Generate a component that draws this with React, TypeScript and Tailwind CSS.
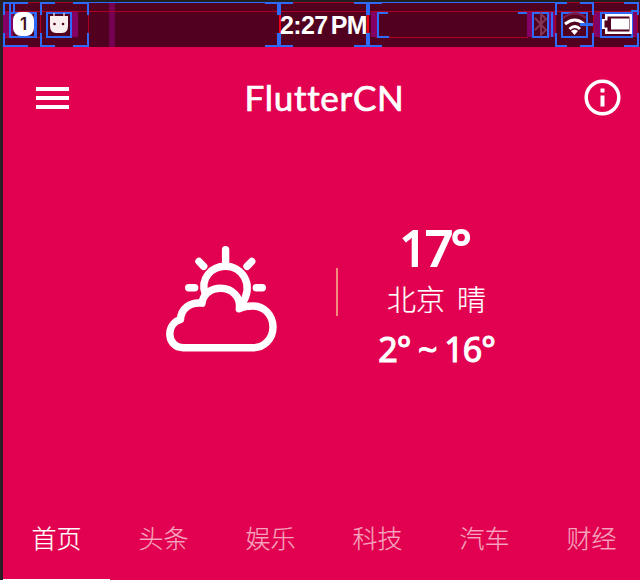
import React from "react";

const cjk = "font-['Noto_Sans_CJK_SC',sans-serif] font-light [-webkit-text-stroke:0.2px_currentColor]";

function LayoutBounds() {
  return (
    <svg className="absolute inset-0" width="640" height="48" viewBox="0 0 640 48" fill="none" shapeRendering="crispEdges">
      <g fill="#850064">
        <path d="M3 12h10v25H3zM72 12h6v25h-6zM371 12h6v25h-6zM527 12h5v25h-5zM548 12h7v25h-7zM593 12h8v25h-8zM632 12h6v25h-6z" />
        <path d="M109 2h6v45h-6z" opacity=".7" />
      </g>
      <g stroke="#ad0027">
        <path d="M3 2.500h637M3 11.500h637M40.500 2v45M88.500 2v45M376 37.500h152M555.500 2v45M593.500 2v45M637.500 2v45M3 37.500h40" />
        <path d="M280 15v18M368 15v18" stroke="#f00018" strokeWidth="2" />
      </g>
      <g stroke="#2f6bfb" strokeWidth="2">
        <path d="M10 13h26v24h-26zM47 13h24v24h-24zM533 13h15v24h-15zM562 13h25v24h-25zM601 13h31v24h-31z" />
        <path d="M4 15V3h24M4 33v13h24M10 2v10M14 2v10M41 15V3h14M73 3h15v12M41 33v13h14M73 46h15v-13" />
        <path d="M265 46h28M354 46h28M382 3h-28M265 3h28M388 13h-10v24h11M518 13h9M552 12v25" />
        <path d="M88 2.500h190M382 2.500h173" strokeWidth="1" />
        <path d="M556 15V3h11M580 3h13v12M556 33v13h11M580 46h13v-13M624 3h14v12M624 46h14v-13M638 11h-7" />
        <path d="M279 2v13M279 33v14M368 2v13M368 33v14" strokeWidth="4" />
        <path d="M35.500 12v25" strokeWidth="3" />
      </g>
    </svg>
  );
}

function StatusBar() {
  return (
    <header className="relative h-[47px] shrink-0 border-t-2 border-[#202023] bg-[#51001f]">
      <div className="absolute -left-[3px] -top-[2px] h-12 w-[640px]">
        <LayoutBounds />
        <div className="absolute left-[13px] top-3 flex h-6 w-[21px] items-center justify-center rounded-[8px] bg-white font-['Inter',sans-serif] text-[17px] font-semibold leading-none text-[#40101f]">1</div>
        <svg className="absolute left-[49px] top-[12px]" width="20" height="22" viewBox="0 0 20 22">
          <path d="M5 1v4M15 1v4" stroke="#d9c3ce" strokeWidth="1.500" />
          <path d="M1 4h18v10q0 7-6 7H7q-6 0-6-7z" fill="#f8eef0" />
          <circle cx="5.500" cy="12" r="1.300" fill="#51001f" /><circle cx="14" cy="12" r="1.300" fill="#51001f" />
        </svg>
        <div className="absolute left-[280px] top-[11px] whitespace-nowrap font-['Liberation_Sans',sans-serif] text-[25px] font-bold leading-[28px] tracking-[-0.600px] text-white">2:27<span className="ml-[3px]">PM</span></div>
        <svg className="absolute left-[532px] top-3" width="18" height="25" viewBox="0 0 18 25" fill="none" stroke="#813455" strokeWidth="2">
          <path d="m3 6 11 12-5 5V2l5 5L3 18" />
        </svg>
        <svg className="absolute left-[561px] top-3" width="32" height="24" viewBox="0 0 32 24" fill="none" stroke="white" strokeWidth="3">
          <path d="M2 6Q14-3 25 6" stroke="#7c1945" strokeWidth="2.500" />
          <path d="M4 12Q14 4 23 12M8.500 17Q14 12 19 17" /><path d="m10 19q4-3 7 0l-3.500 4z" fill="white" stroke="none" />
          <path d="M19 12.500h13" stroke="#2f6bfb" />
        </svg>
        <svg className="absolute left-[601px] top-3" width="32" height="24" viewBox="0 0 32 24">
          <path d="M4 2h27v20H4v-5H1V7h3z" fill="white" /><path d="M6.500 4.500h22v15h-22v-4h-3v-7h3z" fill="#51001f" /><path d="M10 6.500h18v11H10z" fill="white" />
        </svg>
      </div>
    </header>
  );
}

function WeatherIcon() {
  return (
    <svg width="112" height="108" viewBox="0 0 112 108" fill="none" stroke="white" strokeWidth="7.400" strokeLinecap="round" strokeLinejoin="round">
      <path d="M59.600 4.700v15M33 16.500l4.700 4.800M85.700 16.500l-4.700 4.800M22.700 42.700h6M90.300 42.700h6" />
      <path d="M39.200 48.500C34 34 45 21.300 59.500 21.300C75 21.300 89 38 76 59" />
      <path d="M17.500 102.700C9 102.700 3.800 96.500 3.800 89C3.800 82 8 76.500 14.500 74.500C15 64 24 56.500 36 58.200C37 49 45 43.300 54.700 43.300C66 43.300 75 52 73.300 63.800C77 61.800 82 61 87 61C98 61 107 70 107 82C107 94 98 102.700 87 102.700Z" />
    </svg>
  );
}

const tabs = ["首页", "头条", "娱乐", "科技", "汽车", "财经"];

export default function App() {
  return (
    <div className="flex h-[580px] w-[640px] flex-col overflow-hidden border-l-[3px] border-[#2b1e25] bg-[#e20050] text-white">
      <StatusBar />
      <div className="flex h-[103px] shrink-0 items-center justify-between pl-[33px] pr-[19px]">
        <div className="mb-[1px] flex w-[33px] flex-col gap-[5px]">
          <div className="h-1 bg-white" /><div className="h-1 bg-white" /><div className="h-1 bg-white" />
        </div>
        <h1 className="mb-[3px] mr-[4px] whitespace-nowrap font-['Lato',sans-serif] text-[35px] font-normal leading-none tracking-[0.700px] [-webkit-text-stroke:0.700px_white]">FlutterCN</h1>
        <svg className="mb-[2px]" width="37" height="37" viewBox="0 0 37 37" fill="none">
          <circle cx="18.500" cy="18.500" r="16.300" stroke="white" strokeWidth="3.500" />
          <path d="M16.500 9.500h4v4h-4zM16.500 16.500h4v11h-4z" fill="white" />
        </svg>
      </div>
      <main className="flex flex-1 pl-[163px]">
        <div className="w-[112px] pt-[95px]"><WeatherIcon /></div>
        <div className="ml-[58px] mt-[118px] h-[48px] w-[2px] bg-[#f58b7c]" />
        <div className="flex w-[197px] flex-col items-center font-['Noto_Sans',sans-serif]">
          <div className="mr-[5px] mt-[67px] h-[62px] text-[50px] font-normal leading-[60px] tracking-[-3px] [-webkit-text-stroke:1.900px_white]">17°</div>
          <div className={`mt-[1px] h-[38px] whitespace-pre text-[29px] leading-[36px] ${cjk}`}>北京<span className="ml-[12px]">晴</span></div>
          <div className="mt-[9px] whitespace-pre text-[34px] font-normal leading-[44px] tracking-[-1px] [-webkit-text-stroke:1.100px_white]">2° ~ 16°</div>
        </div>
      </main>
      <nav className="flex h-[85px] w-[642px] shrink-0">
        {tabs.map((t, i) => (
          <div key={t} className={`flex h-full w-[107px] shrink-0 justify-center border-b pt-[24px] text-[25px] leading-[36px] ${cjk} ${i === 0 ? "border-white text-white" : "border-transparent text-[#f5a6be]"}`}>{t}</div>
        ))}
      </nav>
    </div>
  );
}
